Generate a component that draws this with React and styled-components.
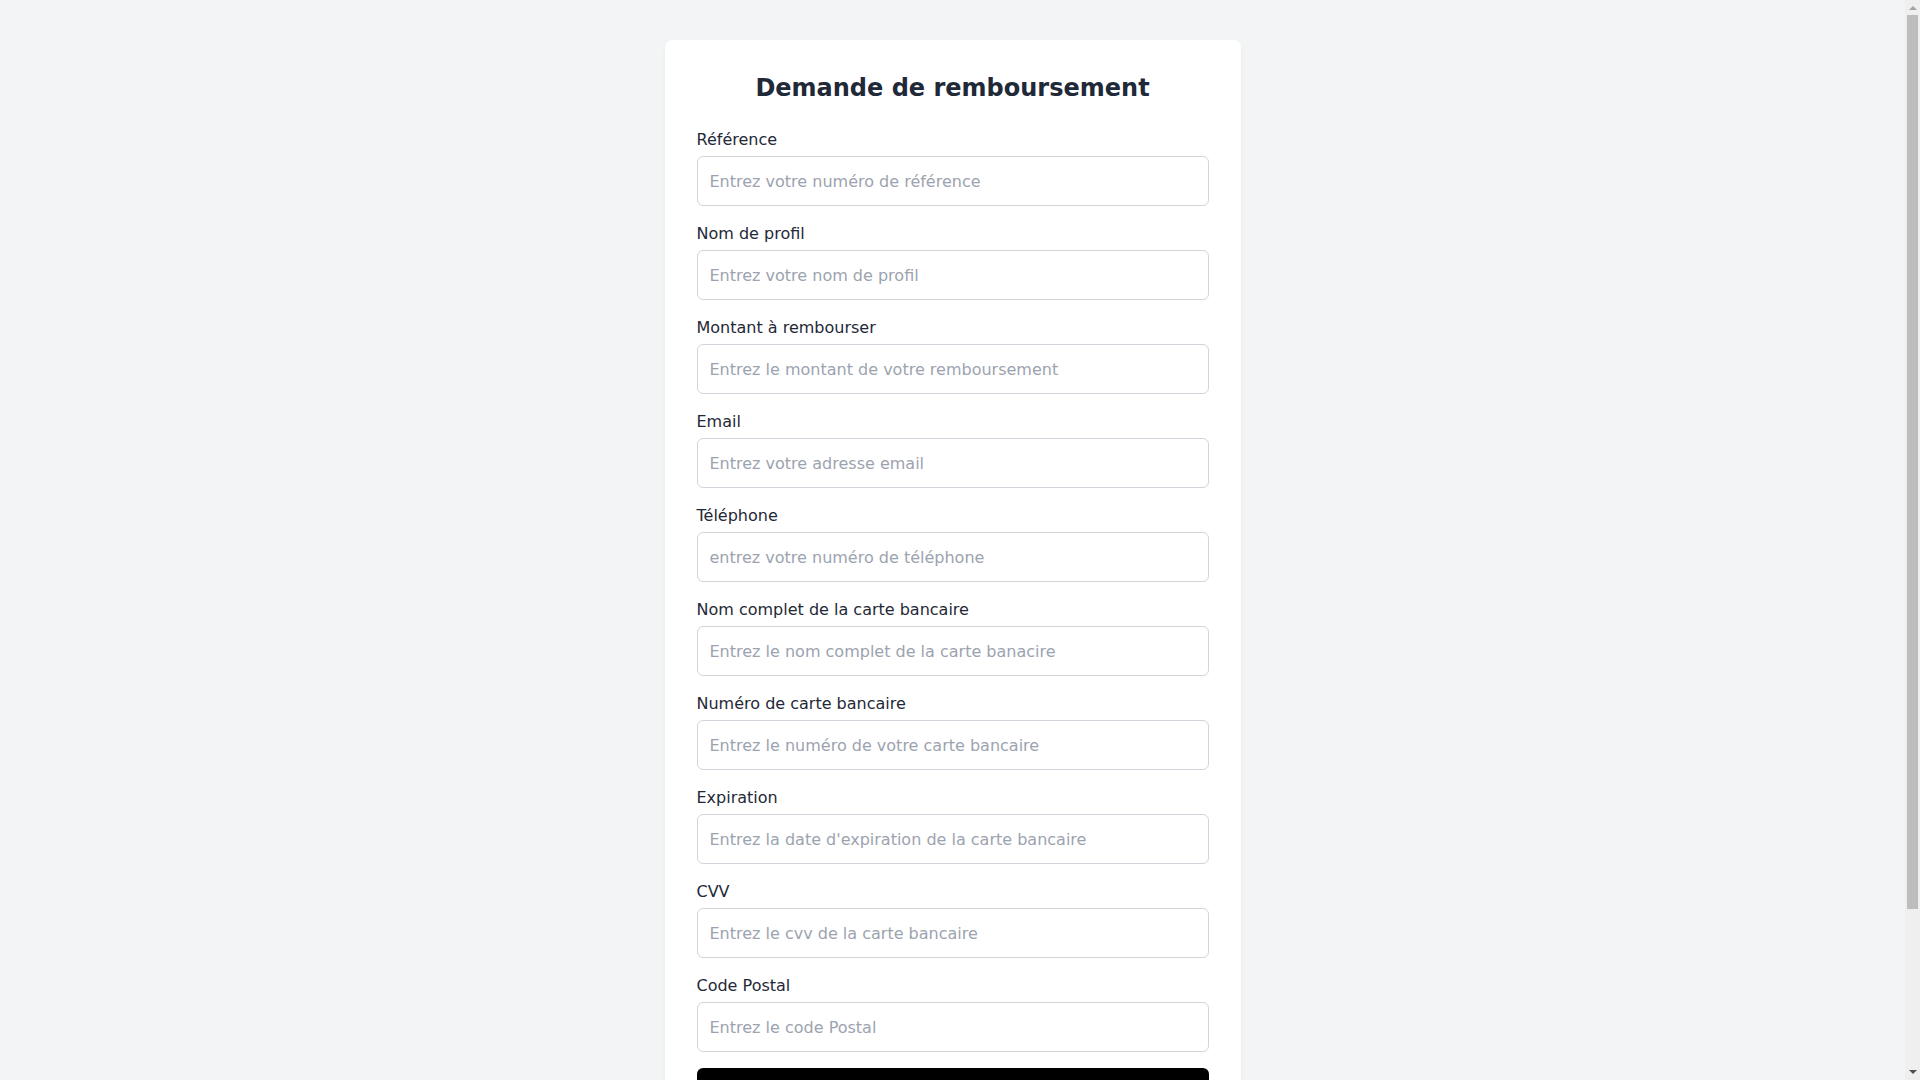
import React from "react";
import styled, { createGlobalStyle } from "styled-components";

const GlobalStyle = createGlobalStyle`
  * { box-sizing: border-box; }
  html, body { margin: 0; padding: 0; }
  body {
    background: #f3f4f6;
    font-family: "DejaVu Sans", "Liberation Sans", sans-serif;
    color: #1f2937;
  }
`;

const Page = styled.div`
  min-height: 100vh;
  display: flex;
  justify-content: center;
  align-items: flex-start;
  padding: 40px 31px 40px 16px;
`;

const Card = styled.form`
  width: 100%;
  max-width: 576px;
  background: #ffffff;
  border-radius: 8px;
  box-shadow: 0 4px 6px -1px rgba(0, 0, 0, 0.06), 0 2px 4px -2px rgba(0, 0, 0, 0.05);
  padding: 32px;
`;

const Title = styled.h1`
  margin: 0 0 24px;
  font-size: 24px;
  line-height: 32px;
  font-weight: 700;
  text-align: center;
  color: #1f2937;
`;

const Field = styled.div`
  margin-bottom: 16px;
`;

const Label = styled.label`
  display: block;
  font-size: 16px;
  line-height: 24px;
  color: #1f2937;
  margin-bottom: 4px;
`;

const Input = styled.input`
  display: block;
  width: 100%;
  height: 50px;
  padding: 12px 12px;
  font-family: inherit;
  font-size: 16px;
  line-height: 24px;
  color: #1f2937;
  background: #ffffff;
  border: 1px solid #d1d5db;
  border-radius: 6px;
  outline: none;
  &::placeholder {
    color: #9ca3af;
  }
`;

const Button = styled.button`
  display: block;
  width: 100%;
  padding: 12px 16px;
  font-family: inherit;
  font-size: 16px;
  line-height: 24px;
  font-weight: 600;
  color: #ffffff;
  background: #000000;
  border: none;
  border-radius: 6px;
  cursor: pointer;
`;

/* Overlay mimicking the browser's classic vertical scrollbar */
const ScrollTrack = styled.div`
  position: fixed;
  top: 0;
  right: 0;
  width: 15px;
  height: 100vh;
  background: #efefef;
  display: flex;
  flex-direction: column;
  align-items: center;
`;

const Arrow = styled.div`
  width: 15px;
  height: 15px;
  display: flex;
  align-items: center;
  justify-content: center;
  flex: none;
`;

const Thumb = styled.div`
  width: 11px;
  height: 894px;
  background: #bdbdbd;
  flex: none;
`;

const Spacer = styled.div`
  flex: 1;
`;

const fields = [
  ["Référence", "Entrez votre numéro de référence"],
  ["Nom de profil", "Entrez votre nom de profil"],
  ["Montant à rembourser", "Entrez le montant de votre remboursement"],
  ["Email", "Entrez votre adresse email"],
  ["Téléphone", "entrez votre numéro de téléphone"],
  ["Nom complet de la carte bancaire", "Entrez le nom complet de la carte banacire"],
  ["Numéro de carte bancaire", "Entrez le numéro de votre carte bancaire"],
  ["Expiration", "Entrez la date d'expiration de la carte bancaire"],
  ["CVV", "Entrez le cvv de la carte bancaire"],
  ["Code Postal", "Entrez le code Postal"],
];

export default function App() {
  return (
    <>
      <GlobalStyle />
      <Page>
        <Card onSubmit={(e) => e.preventDefault()}>
          <Title>Demande de remboursement</Title>
          {fields.map(([label, ph], i) => (
            <Field key={i}>
              <Label htmlFor={`f${i}`}>{label}</Label>
              <Input id={`f${i}`} placeholder={ph} />
            </Field>
          ))}
          <Button type="submit">Envoyer</Button>
        </Card>
      </Page>
      <ScrollTrack aria-hidden="true">
        <Arrow>
          <svg width="8" height="5" viewBox="0 0 8 5">
            <path d="M0 5 L4 1 L8 5 Z" fill="#a3a3a3" />
          </svg>
        </Arrow>
        <Thumb />
        <Spacer />
        <Arrow>
          <svg width="8" height="5" viewBox="0 0 8 5">
            <path d="M0 0 L8 0 L4 4 Z" fill="#505050" />
          </svg>
        </Arrow>
      </ScrollTrack>
    </>
  );
}
